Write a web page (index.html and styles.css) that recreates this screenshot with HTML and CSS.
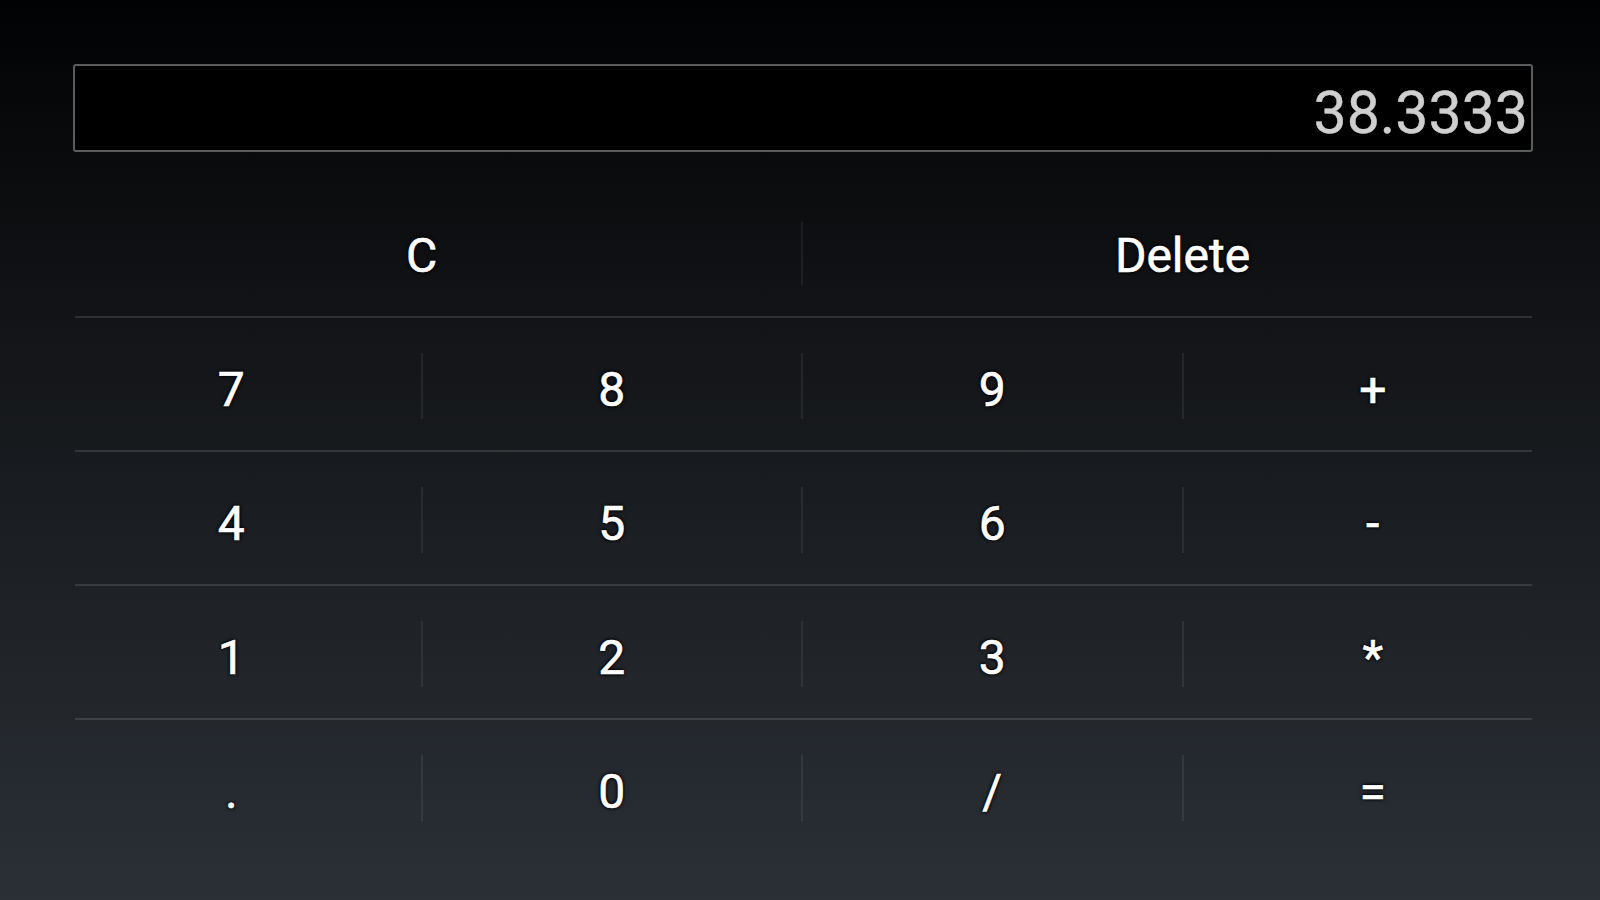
FILE: index.html
```html
<!DOCTYPE html>
<html>
<head>
<meta charset="utf-8">
<link rel="stylesheet" href="styles.css">
</head>
<body>
<div class="app">
  <div class="display"><span class="value">38.3333</span></div>
  <div class="keypad">
    <div class="row top">
      <div class="key">C</div>
      <div class="divider"></div>
      <div class="key">Delete</div>
    </div>
    <div class="rule"></div>
    <div class="row">
      <div class="key">7</div><div class="divider"></div>
      <div class="key">8</div><div class="divider"></div>
      <div class="key">9</div><div class="divider"></div>
      <div class="key">+</div>
    </div>
    <div class="rule"></div>
    <div class="row">
      <div class="key">4</div><div class="divider"></div>
      <div class="key">5</div><div class="divider"></div>
      <div class="key">6</div><div class="divider"></div>
      <div class="key">-</div>
    </div>
    <div class="rule"></div>
    <div class="row">
      <div class="key">1</div><div class="divider"></div>
      <div class="key">2</div><div class="divider"></div>
      <div class="key">3</div><div class="divider"></div>
      <div class="key">*</div>
    </div>
    <div class="rule"></div>
    <div class="row">
      <div class="key">.</div><div class="divider"></div>
      <div class="key">0</div><div class="divider"></div>
      <div class="key">/</div><div class="divider"></div>
      <div class="key">=</div>
    </div>
  </div>
</div>
</body>
</html>
```

FILE: styles.css
```css
html, body {
  margin: 0;
  padding: 0;
}
body {
  width: 1600px;
  height: 900px;
  overflow: hidden;
  background: linear-gradient(to bottom, #010203 0%, #131518 38%, #2b3036 100%);
  font-family: Roboto, "Liberation Sans", sans-serif;
}
.app {
  width: 1520px;
  margin-left: 42px;
  padding-top: 64px;
}
.display {
  margin: 0 29px 0 31px;
  height: 84px;
  background: #000;
  border: 2px solid #5b5c5e;
  border-radius: 3px;
  display: flex;
  align-items: center;
  justify-content: flex-end;
  padding-right: 3px;
}
.value {
  font-size: 59px;
  color: #cfcfcf;
  line-height: 1;
  padding-top: 8px;
  -webkit-text-stroke: 0.4px #cfcfcf;
}
.keypad {
  margin-top: 32px;
  display: flex;
  flex-direction: column;
}
.row {
  height: 132px;
  display: flex;
  align-items: center;
}
.key {
  flex: 1;
  height: 100%;
  display: flex;
  align-items: center;
  justify-content: center;
  padding-top: 10px;
  box-sizing: border-box;
  font-size: 48px;
  color: #ffffff;
  -webkit-text-stroke: 0.6px #ffffff;
  text-shadow: 0 0 2px #000, 0 0 3px #000, 0 0 4px #000;
}
.divider {
  width: 2px;
  height: 66px;
  margin-top: 4px;
  background: rgba(255, 255, 255, 0.07);
}
.top .divider {
  height: 63px;
  margin-top: 6px;
  background: rgba(255, 255, 255, 0.06);
}
.rule {
  height: 2px;
  margin: 0 30px 0 33px;
  background: rgba(255, 255, 255, 0.12);
}
```
